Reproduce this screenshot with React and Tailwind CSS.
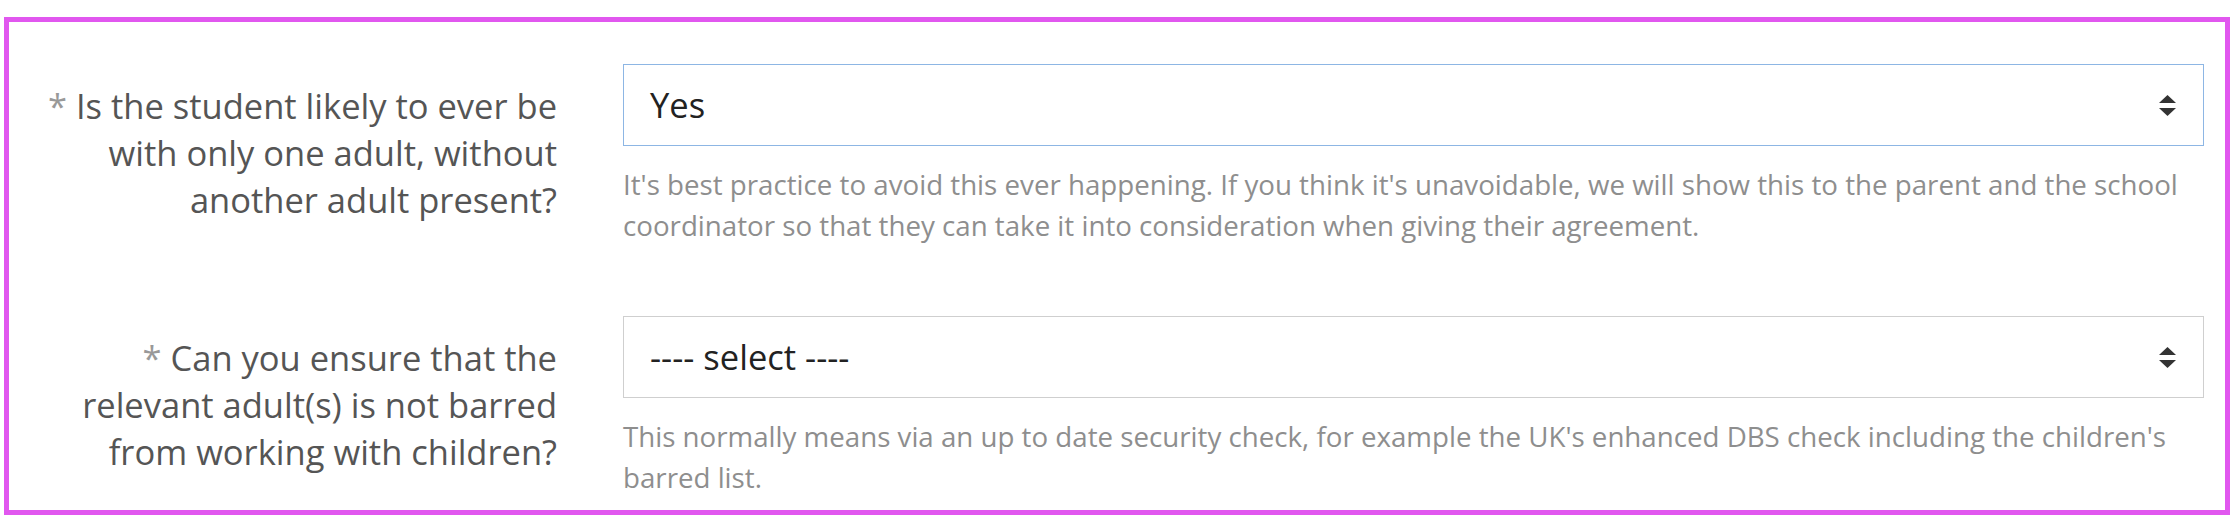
import React from "react";

function Arrows() {
  return (
    <svg width="17" height="21" viewBox="0 0 17 21" className="shrink-0">
      <polygon points="8.5,0 17,8 0,8" fill="#333" />
      <polygon points="0,13 17,13 8.5,21" fill="#333" />
    </svg>
  );
}

function Row({ label, value, focused, help, last }) {
  return (
    <div className={`flex ${last ? "" : "mb-[70px]"}`}>
      <div className="w-[548px] shrink-0 pt-[18px] text-right text-[34.5px] leading-[47px] text-[#555]">
        <span className="text-[#999]">*</span> {label}
      </div>
      <div className="ml-[66px] flex-1">
        <div
          className={`flex h-[82px] items-center justify-between border bg-white pl-[26px] pr-[27px] text-[34.5px] text-[#222] ${
            focused ? "border-[#8db6e4]" : "border-[#cfcfcf]"
          }`}
        >
          <span>{value}</span>
          <Arrows />
        </div>
        <div className="mt-[18px] text-[27.7px] leading-[41px] text-[#8e8e8e]">{help}</div>
      </div>
    </div>
  );
}

export default function App() {
  return (
    <div className="h-[520px] w-[2234px] bg-white pl-[4px] pt-[17px]" style={{ fontFamily: '"Open Sans", sans-serif' }}>
      <div className="h-[498px] w-[2226px] border-[5px] border-[#e157ef] pr-[21px] pt-[42px]">
        <Row
          label={<>Is the student likely to ever be<br />with only one adult, without<br />another adult present?</>}
          value="Yes"
          focused
          help="It's best practice to avoid this ever happening. If you think it's unavoidable, we will show this to the parent and the school coordinator so that they can take it into consideration when giving their agreement."
        />
        <Row
          label={<>Can you ensure that the<br />relevant adult(s) is not barred<br />from working with children?</>}
          value="---- select ----"
          help="This normally means via an up to date security check, for example the UK's enhanced DBS check including the children's barred list."
          last
        />
      </div>
    </div>
  );
}
